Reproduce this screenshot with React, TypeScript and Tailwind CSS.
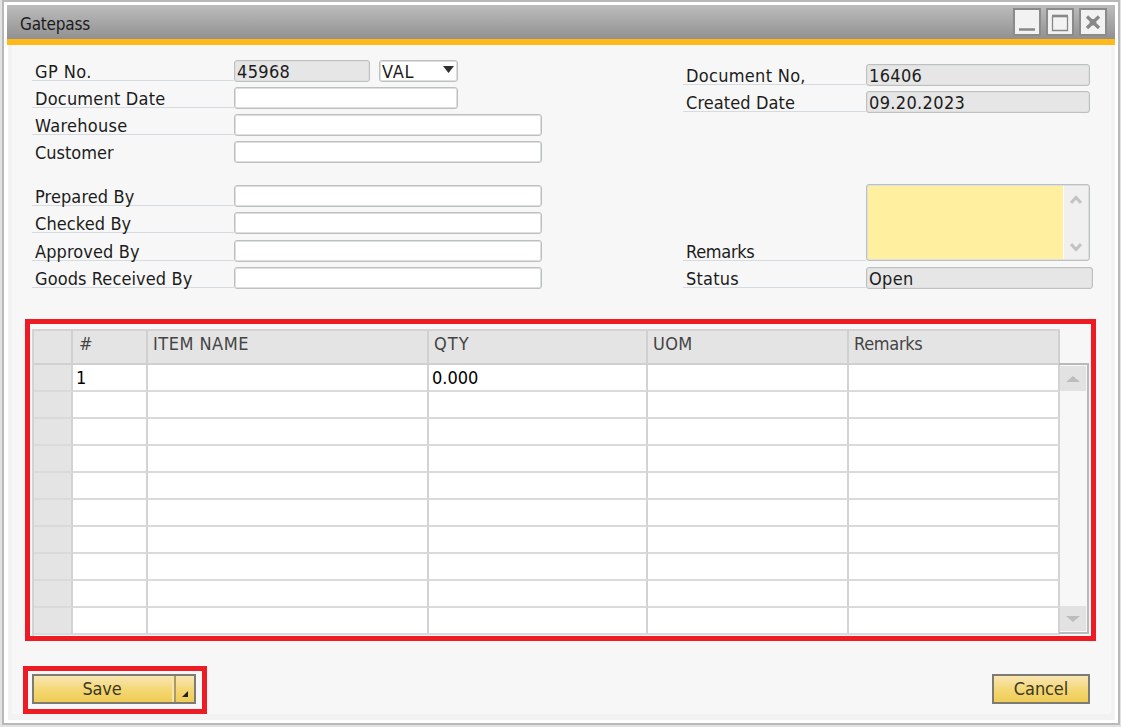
import React from "react";

const fieldBase =
  "h-[22px] shrink-0 rounded-[3px] border border-[#bcc0bf] shadow-[inset_0_0_0_1px_#dde0df] pt-px pl-[2px] leading-[20px] whitespace-nowrap";

function Row({
  label,
  spacing = "",
  mt = "",
  line = true,
  width = "w-[308px]",
  filled = false,
  labelWidth = "w-[202px]",
  value = "",
  children,
}: {
  label: string;
  spacing?: string;
  mt?: string;
  line?: boolean;
  width?: string;
  filled?: boolean;
  labelWidth?: string;
  value?: string;
  children?: React.ReactNode;
}) {
  return (
    <div className={`flex h-[22px] ${mt}`}>
      <div
        className={`h-[21px] shrink-0 border-b pl-[3px] leading-[23px] whitespace-nowrap ${labelWidth} ${spacing} ${
          line ? "border-[#d5dce1]" : "border-transparent"
        }`}
      >
        {label}
      </div>
      <div className={`${fieldBase} tracking-[0.35px] ${width} ${filled ? "bg-[#e6e6e6]" : "bg-white"}`}>{value}</div>
      {children}
    </div>
  );
}

function WindowButton({ children }: { children: React.ReactNode }) {
  return (
    <div className="h-7 w-7 border-2 border-[#8b8b8b] bg-[#f2f2f2]">
      <svg viewBox="0 0 24 24" className="h-6 w-6">
        {children}
      </svg>
    </div>
  );
}

const headers = [
  { text: "", cls: "" },
  { text: "#", cls: "pl-[6px]" },
  { text: "ITEM NAME", cls: "pl-[5px] tracking-[0.5px]" },
  { text: "QTY", cls: "pl-[5px] tracking-[1px]" },
  { text: "UOM", cls: "pl-[5px] tracking-[0.3px]" },
  { text: "Remarks", cls: "pl-[5px] tracking-[-0.3px]" },
];

const rows = [["", "1", "", "0.000", "", ""], ...Array.from({ length: 9 }, () => ["", "", "", "", "", ""])];

const gridCols = "grid grid-cols-[39px_75px_281px_219px_201px_211px] grid-rows-[100%]";

export default function App() {
  return (
    <div className="h-[727px] w-[1121px] overflow-hidden bg-[#e2e2e2] pl-[2px] font-['DejaVu_Sans_Condensed','DejaVu_Sans',sans-serif] text-[18px] text-[#1c1c1c] [font-stretch:condensed]">
      <div className="h-[725px] w-[1118px] border-2 border-[#b9b9b9] bg-white px-[3px] pt-[3px]">
        <header className="flex h-[34px] w-[1108px] items-center justify-between bg-linear-to-b from-[#bdbdbd] to-[#919191] pr-[8px] pl-[13px]">
          <span className="pt-[5px] text-[17px] tracking-[-0.2px]">Gatepass</span>
          <div className="flex gap-[5px]">
            <WindowButton>
              <path d="M4 19.5H20" stroke="#888" strokeWidth="2.5" />
            </WindowButton>
            <WindowButton>
              <path d="M4.5 6V20.5H19.5V6" fill="none" stroke="#888" strokeWidth="1.3" />
              <path d="M4 6H20" stroke="#888" strokeWidth="2.6" />
            </WindowButton>
            <WindowButton>
              <path d="M6 6.5L18 18M18 6.5L6 18" stroke="#888" strokeWidth="3.2" />
              <circle cx="12" cy="12.2" r="3.3" fill="#888" />
            </WindowButton>
          </div>
        </header>
        <div className="h-[6px] w-[1108px] bg-[#ffb919]" />
        <main className="ml-px h-[675px] w-[1107px] border-x-4 border-b-[6px] border-[#f2f2f2] bg-[#f7f7f7] pl-[11px]">
          <div className="flex h-[274px] pt-[15px] pl-[9px]">
            <div className="w-[651px]">
              <Row label="GP No." spacing="tracking-[0.4px]" filled width="w-[136px]" value="45968">
                <div className={`${fieldBase} ml-[9px] flex w-[79px] justify-between bg-white pr-[3px] tracking-[0.8px]`}>
                  VAL
                  <svg viewBox="0 0 11 7" className="mt-[4px] h-[7px] w-[11px]">
                    <path d="M0 0H11L5.5 7Z" fill="#303030" />
                  </svg>
                </div>
              </Row>
              <Row mt="mt-[5px]" label="Document Date" spacing="tracking-[0.2px]" width="w-[224px]" />
              <Row mt="mt-[5px]" label="Warehouse" spacing="tracking-[0.3px]" />
              <Row mt="mt-[5px]" label="Customer" line={false} />
              <Row mt="mt-[22px]" label="Prepared By" spacing="tracking-[0.1px]" />
              <Row mt="mt-[5px]" label="Checked By" spacing="tracking-[0.1px]" />
              <Row mt="mt-[6px]" label="Approved By" spacing="tracking-[0.1px]" />
              <Row mt="mt-[5px]" label="Goods Received By" spacing="tracking-[0.1px]" />
            </div>
            <div className="pt-[4px]">
              <Row label="Document No," spacing="tracking-[0.3px]" labelWidth="w-[183px]" width="w-[224px]" filled value="16406" />
              <Row mt="mt-[5px]" label="Created Date" spacing="tracking-[0.1px]" labelWidth="w-[183px]" width="w-[224px]" filled value="09.20.2023" />
              <div className="mt-[71px] flex h-[77px] items-end">
                <div className="h-[21px] w-[183px] border-b border-[#d5dce1] pl-[3px] leading-[23px] tracking-[-0.3px]">Remarks</div>
                <div className="flex h-[77px] w-[224px] rounded-[3px] border border-[#bcc0bf] bg-[#ffef9f] p-px shadow-[inset_0_0_0_1px_#dde0df]">
                  <div className="ml-auto flex w-[25px] flex-col items-center justify-between border-l border-white bg-[#f0f0f0] pt-[9px] pb-[7px]">
                    <svg viewBox="0 0 12 10" className="h-[10px] w-3">
                      <path d="M1 8L6 2.5L11 8" fill="none" stroke="#c3c3c3" strokeWidth="3" />
                    </svg>
                    <svg viewBox="0 0 12 10" className="h-[10px] w-3">
                      <path d="M1 2L6 7.5L11 2" fill="none" stroke="#c3c3c3" strokeWidth="3" />
                    </svg>
                  </div>
                </div>
              </div>
              <Row mt="mt-[6px]" label="Status" spacing="tracking-[0.2px]" labelWidth="w-[183px]" width="w-[227px]" filled value="Open" />
            </div>
          </div>

          <section className="ml-[2px] flex h-[322px] w-[1071px] border-[5px] border-[#ed1c24] pt-[5px] pl-[2px]">
            <div className="w-[1028px] shrink-0 border-t-2 border-l-2 border-[#d3d3d3]">
              <div className={`${gridCols} h-[34px] bg-[#e4e4e4] text-[#444]`}>
                {headers.map((h, i) => (
                  <div key={i} className={`border-r-2 border-b-2 border-[#d0d0d0] leading-[25px] ${h.cls}`}>
                    {h.text}
                  </div>
                ))}
              </div>
              {rows.map((r, i) => (
                <div key={i} className={`${gridCols} h-[27px] bg-white text-black`}>
                  {r.map((c, j) => (
                    <div
                      key={j}
                      className={`border-r-2 border-b-2 border-r-[#d3d3d3] border-b-[#dadada] pl-[3px] leading-[25px] ${
                        j === 0 ? "bg-[#e4e4e4]" : ""
                      }`}
                    >
                      {c}
                    </div>
                  ))}
                </div>
              ))}
            </div>
            <div className="mt-[34px] -ml-px flex h-[271px] w-[30px] shrink-0 flex-col justify-between border-t-2 border-r-2 border-b-2 border-[#b9b9b9] p-px">
              <div className="flex h-[25px] items-center justify-center bg-[#e2e2e2]">
                <svg viewBox="0 0 14 6" className="h-[6px] w-[14px]">
                  <path d="M0 6L7 0L14 6Z" fill="#bdbdbd" />
                </svg>
              </div>
              <div className="flex h-[25px] items-center justify-center bg-[#e2e2e2]">
                <svg viewBox="0 0 14 6" className="h-[6px] w-[14px]">
                  <path d="M0 0L7 6L14 0Z" fill="#bdbdbd" />
                </svg>
              </div>
            </div>
          </section>

          <footer className="mt-[25px] flex justify-between pr-[21px]">
            <div className="h-[48px] w-[184px] border-[5px] border-[#ed1c24] pt-[3px] pl-1">
              <div className="flex h-[30px] w-[164px] border-2 border-[#7c7c74] bg-linear-to-b from-[#f8e6b3] via-[#f4d876] to-[#f0cc55] text-[#3c3826]">
                <div className="flex-1 border-r-2 border-[#f9e6a6] pr-[2px] text-center leading-[25px] tracking-[-0.2px]">Save</div>
                <div className="flex w-[20px] items-end justify-center border-l-2 border-[#aa9a68] pb-[5px]">
                  <svg viewBox="0 0 6 6" className="h-[6px] w-[6px]">
                    <path d="M6 0V6H0Z" fill="#222" />
                  </svg>
                </div>
              </div>
            </div>
            <div className="mt-2 h-[30px] w-[98px] border-2 border-[#7c7c74] bg-linear-to-b from-[#f8e6b3] via-[#f4d876] to-[#f0cc55] text-center leading-[25px] tracking-[-0.1px] text-[#3c3826]">
              Cancel
            </div>
          </footer>
        </main>
      </div>
    </div>
  );
}
